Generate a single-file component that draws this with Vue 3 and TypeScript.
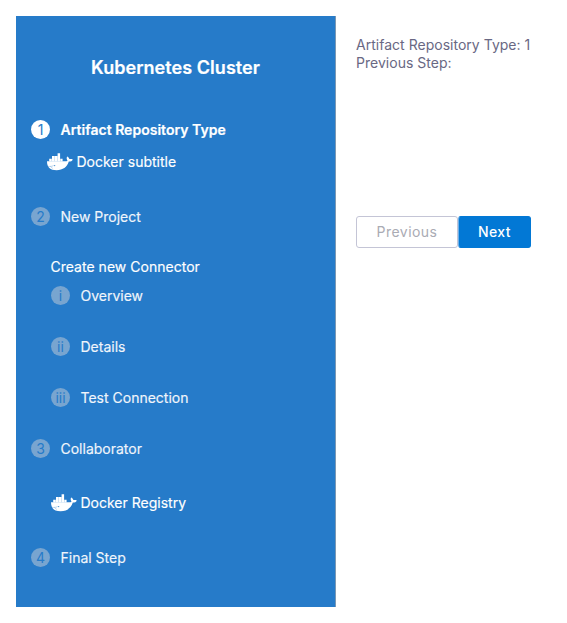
<script setup lang="ts">
interface StepItem {
  label: string
  kind: 'step' | 'substep' | 'group' | 'subtitle' | 'icon'
  marker?: string
  active?: boolean
}

const title = 'Kubernetes Cluster'

const steps: StepItem[] = [
  { label: 'Artifact Repository Type', kind: 'step', marker: '1', active: true },
  { label: 'Docker subtitle', kind: 'subtitle' },
  { label: 'New Project', kind: 'step', marker: '2' },
  { label: 'Create new Connector', kind: 'group' },
  { label: 'Overview', kind: 'substep', marker: 'i' },
  { label: 'Details', kind: 'substep', marker: 'ii' },
  { label: 'Test Connection', kind: 'substep', marker: 'iii' },
  { label: 'Collaborator', kind: 'step', marker: '3' },
  { label: 'Docker Registry', kind: 'icon' },
  { label: 'Final Step', kind: 'step', marker: '4' },
]
</script>

<template>
  <div class="wizard">
    <aside class="sidebar">
      <h1 class="title">{{ title }}</h1>
      <ul class="steps">
        <li v-for="step in steps" :key="step.label" class="row" :class="[step.kind, { active: step.active }]">
          <span v-if="step.marker" class="marker">{{ step.marker }}</span>
          <svg v-if="step.kind === 'subtitle' || step.kind === 'icon'" class="docker" viewBox="0 0 26 18" aria-hidden="true">
            <path d="M0 8.300h17.600c1.500 0 2.400-.3 2.900-.9-1-1.300-1.100-2.700-.3-3.900 1.300.7 2 1.600 2.100 2.600 1.300-.3 2.500-.2 3.500.3-.6 1.500-2 2.200-4 2.200C20 14 16 17.300 9.600 17.300 3.200 17.300 0 14.400 0 8.300Z" />
            <path d="M2.200 5.700h2.600v2.700H2.200zM5 3h2.600v5.400H5zM7.800 3h2.600v5.400H7.800zM10.600 0.300h2.500v8.100h-2.500zM13.300 5.700h2.300v2.700h-2.300z" />
            <path class="seam" d="M.8 13.300c2.600.4 4.500 0 5.900-.9M5.800 15.400c-1-.5-1.700-1.100-2.200-2" />
            <circle class="eye" cx="7.700" cy="12.600" r=".55" />
          </svg>
          <span class="label">{{ step.label }}</span>
        </li>
      </ul>
    </aside>
    <main class="content">
      <div class="info">
        <div>Artifact Repository Type: 1</div>
        <div>Previous Step:</div>
      </div>
      <div class="actions">
        <button class="button previous" type="button" disabled>Previous</button>
        <button class="button next" type="button">Next</button>
      </div>
    </main>
  </div>
</template>

<style>
body {
  margin: 0;
  background: #fff;
}
</style>

<style scoped>
.wizard {
  display: flex;
  padding: 16px;
  font-family: Inter, "Liberation Sans", sans-serif;
  font-size: 14px;
  color: #696883;
}
.sidebar {
  box-sizing: border-box;
  flex: 0 0 320px;
  height: 591px;
  padding: 40px 15px 0;
  background: #267bc9;
  border-right: 1px solid #7b98b3;
  color: #fff;
}
.title {
  margin: 0 0 41px;
  font-size: 18px;
  line-height: 23px;
  font-weight: 600;
  letter-spacing: 0.050px;
  text-align: center;
  -webkit-text-stroke: 0.200px #fff;
}
.steps {
  margin: 0;
  padding: 0;
  list-style: none;
}
.row {
  display: flex;
  align-items: center;
  height: 20px;
  margin-bottom: 31px;
  line-height: 20px;
  white-space: nowrap;
}
.marker {
  flex: none;
  width: 19px;
  height: 19px;
  margin: 0 10.500px 1px 0;
  border-radius: 50%;
  background: #78a5d0;
  color: #267bc9;
  line-height: 19px;
  text-align: center;
}
.label {
  color: #f0f5fb;
  -webkit-text-stroke: 0.150px currentColor;
}
.active {
  margin-bottom: 12px;
}
.active .marker {
  background: #fff;
}
.active .label {
  color: #fff;
  font-weight: 600;
  letter-spacing: 0.020px;
  -webkit-text-stroke: 0.200px #fff;
}
.subtitle {
  padding-left: 16px;
  margin-bottom: 35px;
}
.subtitle .label,
.group .label,
.icon .label {
  color: #fff;
}
.step:nth-child(3) {
  margin-bottom: 30px;
}
.group {
  padding-left: 19.500px;
  margin-bottom: 9px;
}
.group .label {
  letter-spacing: 0.020px;
}
.substep {
  padding-left: 20px;
}
.step:nth-child(8) {
  margin-bottom: 34px;
}
.icon {
  padding-left: 20px;
  margin-bottom: 35px;
}
.docker {
  flex: none;
  width: 26px;
  height: 18px;
  margin-right: 3.500px;
  fill: #fff;
}
.seam {
  fill: none;
  stroke: #267bc9;
  stroke-width: 0.300;
}
.eye {
  fill: #267bc9;
}
.content {
  padding: 20px 0 0 20px;
}
.info {
  height: 180px;
  line-height: 18px;
  letter-spacing: 0.020px;
}
.actions {
  display: flex;
}
.button {
  box-sizing: border-box;
  height: 32px;
  padding: 0;
  border: 1px solid #c4c5d6;
  border-radius: 3px;
  font-family: inherit;
  font-size: 14px;
  line-height: 30px;
  letter-spacing: 0.450px;
}
.previous {
  width: 102px;
  background: #fff;
  color: #aaabb4;
}
.next {
  width: 73px;
  border-color: #0278d5;
  border-left-color: #6fb0e6;
  background: #0278d5;
  color: #fff;
  font-weight: 500;
}
</style>
